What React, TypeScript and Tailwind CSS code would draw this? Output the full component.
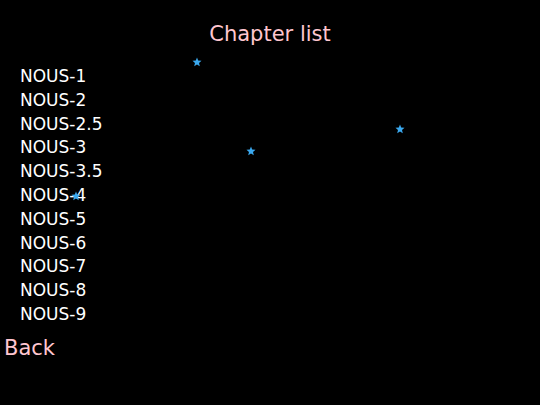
const chapters = ["1", "2", "2.5", "3", "3.5", "4", "5", "6", "7", "8", "9"];

// little blue stars floating over the list
const stars = [
  { x: 197, y: 62 },
  { x: 400, y: 129 },
  { x: 251, y: 151 },
  { x: 76, y: 196 },
];

function Star({ x, y }: { x: number; y: number }) {
  return (
    <svg
      className="absolute"
      style={{ left: x - 5, top: y - 5 }}
      width="10"
      height="10"
      viewBox="0 0 10 10"
    >
      <path
        d="M5 0.5 L6.2 3.6 L9.5 3.8 L7 5.9 L7.8 9.2 L5 7.4 L2.2 9.2 L3 5.9 L0.5 3.8 L3.8 3.6 Z"
        fill="#3aa8ee"
      />
    </svg>
  );
}

export default function App() {
  return (
    <main
      className="relative w-[540px] h-[405px] bg-black overflow-hidden"
      style={{ fontFamily: '"DejaVu Sans", "Noto Sans", sans-serif' }}
    >
      <h1 className="pt-[21px] text-center text-[21px] leading-[26px] text-[#ffc6cf]">
        Chapter list
      </h1>
      <ul className="mt-[18px] pl-[20px] flex flex-col">
        {chapters.map((c) => (
          <li key={c} className="text-[17px] leading-[23.8px] text-white">
            NOUS-{c}
          </li>
        ))}
      </ul>
      <div className="mt-[8px] pl-[4px] text-[21px] leading-[26px] text-[#ffc6cf]">Back</div>
      {stars.map((s, i) => (
        <Star key={i} x={s.x} y={s.y} />
      ))}
    </main>
  );
}
